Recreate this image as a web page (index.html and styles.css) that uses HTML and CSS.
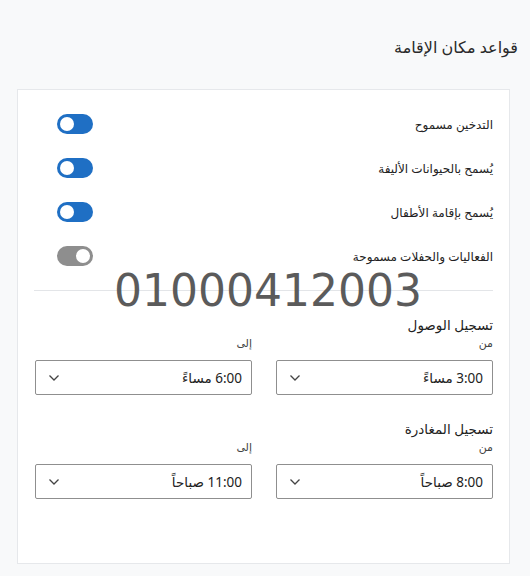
FILE: index.html
```html
<!DOCTYPE html>
<html lang="ar" dir="rtl">
<head>
<meta charset="utf-8">
<link rel="stylesheet" href="styles.css">
</head>
<body>
<main class="page">
  <h1 class="title">قواعد مكان الإقامة</h1>
  <section class="card">
    <div class="row">
      <span class="row-label">التدخين مسموح</span>
      <span class="switch on"><span class="knob"></span></span>
    </div>
    <div class="row">
      <span class="row-label">يُسمح بالحيوانات الأليفة</span>
      <span class="switch on"><span class="knob"></span></span>
    </div>
    <div class="row">
      <span class="row-label">يُسمح بإقامة الأطفال</span>
      <span class="switch on"><span class="knob"></span></span>
    </div>
    <div class="row">
      <span class="row-label">الفعاليات والحفلات مسموحة</span>
      <span class="switch off"><span class="knob"></span></span>
    </div>
    <hr class="divider">

    <h2 class="section-title">تسجيل الوصول</h2>
    <div class="pair">
      <div class="field">
        <span class="field-label">من</span>
        <div class="select"><span class="value">3:00 مساءً</span><svg class="chev" viewBox="0 0 12 8" width="12" height="8"><path d="M1.5 1.5 L6 6 L10.5 1.5" fill="none" stroke="#444" stroke-width="1.3"/></svg></div>
      </div>
      <div class="field">
        <span class="field-label">إلى</span>
        <div class="select"><span class="value">6:00 مساءً</span><svg class="chev" viewBox="0 0 12 8" width="12" height="8"><path d="M1.5 1.5 L6 6 L10.5 1.5" fill="none" stroke="#444" stroke-width="1.3"/></svg></div>
      </div>
    </div>

    <h2 class="section-title">تسجيل المغادرة</h2>
    <div class="pair">
      <div class="field">
        <span class="field-label">من</span>
        <div class="select"><span class="value">8:00 صباحاً</span><svg class="chev" viewBox="0 0 12 8" width="12" height="8"><path d="M1.5 1.5 L6 6 L10.5 1.5" fill="none" stroke="#444" stroke-width="1.3"/></svg></div>
      </div>
      <div class="field">
        <span class="field-label">إلى</span>
        <div class="select"><span class="value">11:00 صباحاً</span><svg class="chev" viewBox="0 0 12 8" width="12" height="8"><path d="M1.5 1.5 L6 6 L10.5 1.5" fill="none" stroke="#444" stroke-width="1.3"/></svg></div>
      </div>
    </div>

    <div class="watermark" dir="ltr">01000412003</div>
  </section>
</main>
</body>
</html>
```

FILE: styles.css
```css
* { box-sizing: border-box; }
html, body {
  margin: 0;
  padding: 0;
  background: #f8f9fa;
}
body {
  font-family: "Noto Sans", "DejaVu Sans", sans-serif;
  color: #222;
}
.page {
  padding: 35px 12px 0 20px;
}
.title {
  margin: 0;
  font-size: 16px;
  font-weight: normal;
  line-height: 24px;
  color: #2a2a2a;
  text-align: right;
}
.card {
  position: relative;
  margin: 30px 8px 0 -3px;
  background: #fff;
  border: 1px solid #e6e8eb;
  padding: 12px 16px 65px 16px;
  height: 475px;
}
.row {
  display: flex;
  align-items: center;
  justify-content: space-between;
  height: 44px;
}
.row-label {
  font-size: 12px;
  color: #222;
}
.switch {
  position: relative;
  width: 36px;
  height: 20px;
  border-radius: 10px;
  margin-left: 23px;
  display: flex;
  align-items: center;
  padding: 0 3px;
}
.switch.on { background: #1f6fc4; justify-content: flex-end; }
.switch.off { background: #8e8e8e; justify-content: flex-start; }
.knob {
  width: 14px;
  height: 14px;
  border-radius: 50%;
  background: #fff;
}
.divider {
  margin: 12px 0 0 0;
  border: 0;
  border-top: 1px solid #e3e5e8;
  height: 0;
}
.section-title {
  margin: 24px 0 0 0;
  font-size: 13.5px;
  font-weight: normal;
  line-height: 20px;
  color: #222;
}
.pair {
  display: grid;
  grid-template-columns: 1fr 1fr;
  column-gap: 24px;
  padding-left: 1px;
}
.field {
  display: flex;
  flex-direction: column;
}
.field-label {
  font-size: 11px;
  line-height: 16px;
  color: #444;
  margin-bottom: 9px;
}
.select {
  display: flex;
  align-items: center;
  justify-content: space-between;
  height: 35px;
  border: 1px solid #8f8f8f;
  border-radius: 2px;
  padding: 0 9px 0 12px;
  background: #fff;
}
.value {
  font-size: 13.5px;
  color: #222;
}
.chev { display: block; }
.watermark {
  position: absolute;
  left: 96px;
  top: 179px;
  font-family: "DejaVu Sans", sans-serif;
  font-size: 44px;
  line-height: 1;
  color: #5b5b5b;
  pointer-events: none;
}
```
